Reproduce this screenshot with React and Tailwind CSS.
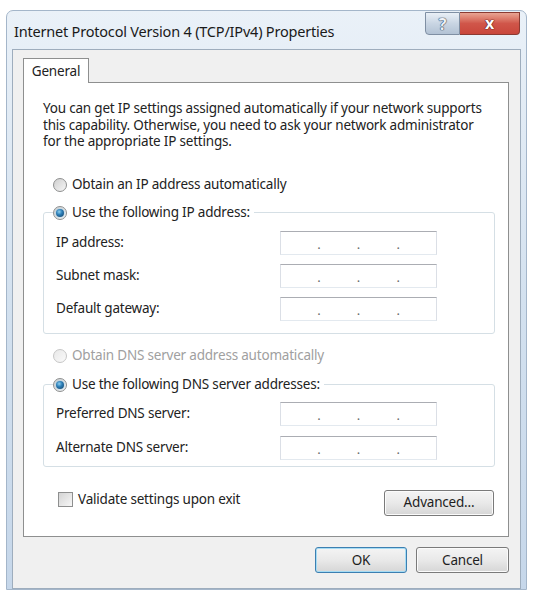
import React from "react";

const font = { fontFamily: '"Noto Sans", "Open Sans", sans-serif' };

function Radio({ checked, disabled }) {
  return (
    <span
      className={
        "relative inline-flex h-[14px] w-[14px] shrink-0 items-center justify-center rounded-full border " +
        (disabled
          ? "border-[#c6c6c6] bg-gradient-to-br from-[#e8e8e8] to-[#fafafa]"
          : "border-[#8e8f8f] bg-gradient-to-br from-[#cfcfcf] to-[#f6f6f6]")
      }
    >
      {checked && (
        <span className="h-[8px] w-[8px] rounded-full bg-[radial-gradient(circle_at_40%_35%,#8fd0f0_0%,#2d7fb8_40%,#123c60_100%)] shadow-[0_0_2px_#7fc4ec]" />
      )}
    </span>
  );
}

function IpBox() {
  return (
    <div className="flex h-[24px] w-[157px] items-center border border-t-[#abadb3] border-x-[#dbdfe6] border-b-[#e3e9ef] bg-white pt-[4px] text-[13px] text-[#6a6a6a]">
      <span className="flex-1" />
      <span className="leading-none">.</span>
      <span className="flex-1" />
      <span className="leading-none">.</span>
      <span className="flex-1" />
      <span className="leading-none">.</span>
      <span className="flex-1" />
    </div>
  );
}

function Row({ label, mb }) {
  return (
    <div className={"flex items-center " + (mb || "")}>
      <span className="w-[224px] shrink-0">{label}</span>
      <IpBox />
    </div>
  );
}

function Button({ children, className, def }) {
  return (
    <div
      className={
        "flex items-center justify-center rounded-[3px] border bg-gradient-to-b from-[#f4f4f4] via-[#e9e9e9] to-[#d6d6d6] text-[#1e1e1e] " +
        (def
          ? "border-[#3c7fb1] shadow-[inset_0_0_0_1px_#a6dcf4] "
          : "border-[#7a7a7a] shadow-[inset_0_0_0_1px_#fbfbfb] ") +
        (className || "")
      }
    >
      {children}
    </div>
  );
}

export default function App() {
  return (
    <div
      className="h-[592px] w-[535px] overflow-hidden bg-white pl-[6px] pr-[8px] pt-[10px] text-[13.5px] tracking-[-0.2px] text-[#222]"
      style={font}
    >
      <div className="flex h-[580px] w-[521px] flex-col rounded-t-[7px] border border-[#a4b6ca] bg-gradient-to-b from-[#eaf1f8] via-[#d3e1ef] to-[#c6d7ea] px-[5px]">
        {/* title bar */}
        <div className="flex h-[38px] shrink-0 items-start pr-[1px]">
          <div className="ml-[2px] mt-[10px] flex-1 text-[14.5px] leading-[20px] text-[#1a1a1a]">
            Internet Protocol Version 4 (TCP/IPv4) Properties
          </div>
          <div className="mt-[1px] flex h-[23px]">
            <div className="flex w-[35px] items-center justify-center rounded-bl-[4px] border border-[#7f8fa3] bg-gradient-to-b from-[#e9eff6] via-[#c9d5e3] to-[#b2c2d4] text-[16px] font-bold leading-none text-[#eef2f7] [text-shadow:0_0_1px_#34465c,0_0_1px_#34465c,0_0_1px_#34465c]">
              ?
            </div>
            <div className="flex w-[60px] items-center justify-center rounded-br-[4px] border border-l-0 border-[#8b3a32] bg-gradient-to-b from-[#e8a493] via-[#d0564a] to-[#c9463b] pb-[2px] text-[16px] font-bold leading-none text-white [text-shadow:0_0_1px_#5a1a12,0_0_1px_#5a1a12,0_0_1px_#5a1a12]">
              x
            </div>
          </div>
        </div>
        {/* client */}
        <div className="flex flex-1 flex-col border border-[#9eadbd] bg-[#f0f0f0] pb-[10px] pl-[10px] pr-[11px] pt-[8px]">
          {/* tab */}
          <div className="relative z-10 -mb-px flex h-[25px] w-[66px] items-center justify-center border border-b-0 border-[#8e8f8f] bg-white">
            General
          </div>
          {/* panel */}
          <div className="flex h-[455px] flex-col border border-[#8e8f8f] bg-white pl-[19px] pr-[13px] pt-[17px]">
            <p className="w-[440px] leading-[16.5px]">
              You can get IP settings assigned automatically if your network supports this capability. Otherwise, you need to ask your network administrator for the appropriate IP settings.
            </p>
            <div className="ml-[10px] mt-[25px] flex h-[20px] items-center gap-[5px]">
              <Radio />
              <span>Obtain an IP address automatically</span>
            </div>
            <fieldset className="mt-[8px] rounded-[3px] border border-[#d5dfe5] pb-[12px] pl-[12px] pt-[8px]">
              <legend className="-ml-[3px] flex h-[20px] items-center gap-[5px] pr-[4px]">
                <Radio checked />
                <span>Use the following IP address:</span>
              </legend>
              <Row label="IP address:" mb="mb-[9px]" />
              <Row label="Subnet mask:" mb="mb-[9px]" />
              <Row label="Default gateway:" />
            </fieldset>
            <div className="ml-[10px] mt-[12px] flex h-[20px] items-center gap-[5px] text-[#a0a0a0]">
              <Radio disabled />
              <span>Obtain DNS server address automatically</span>
            </div>
            <fieldset className="mt-[9px] rounded-[3px] border border-[#d5dfe5] pb-[6px] pl-[12px] pt-[7px]">
              <legend className="-ml-[3px] flex h-[20px] items-center gap-[5px] pr-[4px]">
                <Radio checked />
                <span>Use the following DNS server addresses:</span>
              </legend>
              <Row label="Preferred DNS server:" mb="mb-[10px]" />
              <Row label="Alternate DNS server:" />
            </fieldset>
            <div className="mt-[23px] flex h-[26px] items-center pr-[1px]">
              <div className="mb-[6px] ml-[15px] flex flex-1 items-center gap-[5px]">
                <span className="h-[15px] w-[15px] border border-[#8e8f8f] bg-gradient-to-br from-[#d4d4d4] to-[#f7f7f7]" />
                <span>Validate settings upon exit</span>
              </div>
              <Button className="h-[26px] w-[110px]">Advanced...</Button>
            </div>
          </div>
          <div className="mt-[10px] flex justify-end gap-[9px]">
            <Button def className="h-[26px] w-[92px]">OK</Button>
            <Button className="h-[26px] w-[93px]">Cancel</Button>
          </div>
        </div>
      </div>
    </div>
  );
}
